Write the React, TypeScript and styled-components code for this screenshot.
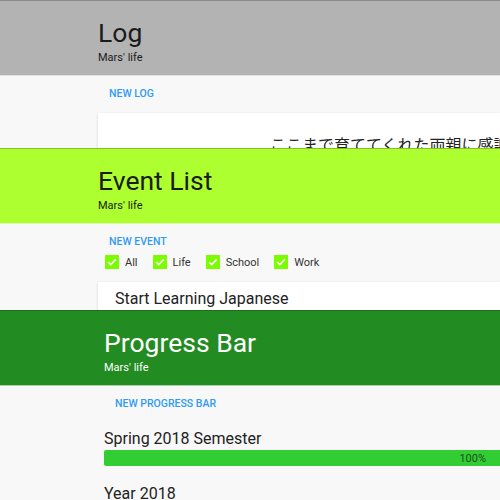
import styled, { createGlobalStyle } from "styled-components";

const Global = createGlobalStyle`
  html, body {
    margin: 0;
    padding: 0;
    background: #f8f8f8;
    font-family: Roboto, "Noto Sans", "Noto Sans CJK JP", sans-serif;
    color: #212121;
    overflow: hidden;
  }
`;

const Page = styled.div`
  width: 500px;
  height: 500px;
  display: flex;
  flex-direction: column;
  overflow: hidden;
`;

const Panel = styled.section<{ $height: number }>`
  flex: 0 0 ${({ $height }) => $height}px;
  height: ${({ $height }) => $height}px;
  overflow: hidden;
  background: #f8f8f8;
  display: flex;
  flex-direction: column;
`;

const Header = styled.header<{ $bg: string; $line: string; $fg: string; $indent: number }>`
  flex: 0 0 76px;
  box-sizing: border-box;
  height: 76px;
  border-top: 1px solid ${({ $line }) => $line};
  border-bottom: 1px solid rgba(255, 255, 255, 0.6);
  background: ${({ $bg }) => $bg};
  color: ${({ $fg }) => $fg};
  padding: 16px 0 0 ${({ $indent }) => $indent}px;
`;

const Title = styled.h1`
  margin: 0;
  font-size: 26.5px;
  font-weight: 400;
  line-height: 32px;
`;

const Subtitle = styled.div`
  margin-top: 2px;
  font-size: 11px;
  line-height: 14px;
`;

const Body = styled.div<{ $indent: number }>`
  padding-left: ${({ $indent }) => $indent}px;
  display: flex;
  flex-direction: column;
  align-items: flex-start;
`;

const TextButton = styled.button<{ $h: number; $top: number }>`
  appearance: none;
  border: 0;
  background: transparent;
  margin-top: ${({ $top }) => $top}px;
  height: ${({ $h }) => $h}px;
  padding: 0 11px;
  font-family: inherit;
  font-size: 10.5px;
  font-weight: 500;
  color: #2f9bf3;
  text-transform: uppercase;
  cursor: pointer;
`;

const Card = styled.div<{ $top: number; $pad: string }>`
  align-self: stretch;
  margin-top: ${({ $top }) => $top}px;
  background: #fff;
  box-shadow: 0 1px 3px rgba(0, 0, 0, 0.14);
  padding: ${({ $pad }) => $pad};
  white-space: nowrap;
  min-height: 60px;
`;

const LogText = styled.div`
  font-size: 16px;
  line-height: 24px;
  color: #222;
`;

const EventTitle = styled.div`
  font-size: 16px;
  line-height: 18px;
  color: #222;
`;

const Filters = styled.div`
  display: flex;
  align-items: center;
  gap: 15px;
  height: 20px;
  padding-left: 7px;
`;

const Filter = styled.label`
  display: flex;
  align-items: center;
  gap: 6px;
  font-size: 11px;
  color: #333;
`;

const Box = styled.span`
  width: 14px;
  height: 14px;
  background: #7cfc00;
  display: flex;
  align-items: center;
  justify-content: center;
`;

const ProgressItem = styled.div<{ $top: number }>`
  align-self: stretch;
  margin-top: ${({ $top }) => $top}px;
`;

const ProgressName = styled.div`
  font-size: 16px;
  line-height: 20px;
  color: #222;
`;

const Track = styled.div`
  margin-top: 1px;
  height: 16px;
  border-radius: 2px 0 0 2px;
  background: #32cd32;
  display: flex;
  align-items: center;
  justify-content: flex-end;
  padding-right: 14px;
  font-size: 11px;
  color: #1f4d1f;
`;

function Check() {
  return (
    <svg width="10" height="8" viewBox="0 0 10 8">
      <path d="M1.2 4.2 L3.8 6.6 L8.8 1.4" fill="none" stroke="#fff" strokeWidth="1.6" />
    </svg>
  );
}

const filters = ["All", "Life", "School", "Work"];

export default function App() {
  return (
    <Page>
      <Global />

      <Panel $height={148}>
        <Header $bg="#b3b3b3" $line="#8a8a8a" $fg="#1b1b1b" $indent={98}>
          <Title>Log</Title>
          <Subtitle>Mars' life</Subtitle>
        </Header>
        <Body $indent={98}>
          <TextButton $h={30} $top={2}>New Log</TextButton>
          <Card $top={5} $pad="21px 0 0 172px">
            <LogText>ここまで育ててくれた両親に感謝</LogText>
          </Card>
        </Body>
      </Panel>

      <Panel $height={162}>
        <Header $bg="#adff2f" $line="#8cbb2c" $fg="#1b1b1b" $indent={98}>
          <Title>Event List</Title>
          <Subtitle>Mars' life</Subtitle>
        </Header>
        <Body $indent={98}>
          <TextButton $h={22} $top={6}>New Event</TextButton>
          <Filters>
            {filters.map((f) => (
              <Filter key={f}>
                <Box>
                  <Check />
                </Box>
                {f}
              </Filter>
            ))}
          </Filters>
          <Card $top={10} $pad="8px 0 0 17px">
            <EventTitle>Start Learning Japanese</EventTitle>
          </Card>
        </Body>
      </Panel>

      <Panel $height={190}>
        <Header $bg="#228b22" $line="#1c6e1c" $fg="#ffffff" $indent={104}>
          <Title>Progress Bar</Title>
          <Subtitle>Mars' life</Subtitle>
        </Header>
        <Body $indent={104}>
          <TextButton $h={30} $top={2}>New Progress Bar</TextButton>
          <ProgressItem $top={11}>
            <ProgressName>Spring 2018 Semester</ProgressName>
            <Track>100%</Track>
          </ProgressItem>
          <ProgressItem $top={18}>
            <ProgressName>Year 2018</ProgressName>
          </ProgressItem>
        </Body>
      </Panel>
    </Page>
  );
}
